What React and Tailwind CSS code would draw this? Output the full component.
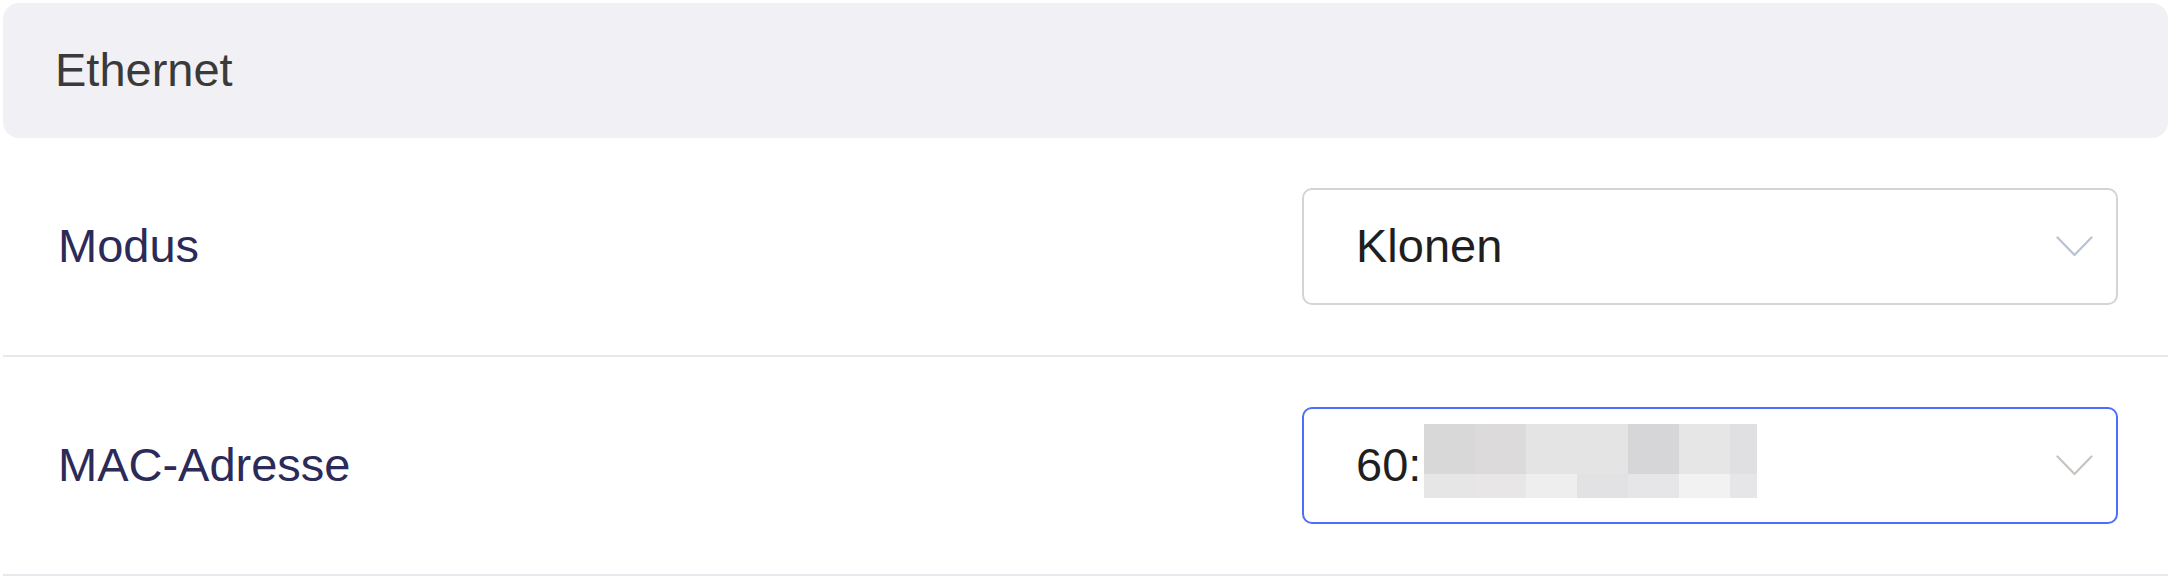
const FONT = "font-['Liberation_Sans',Arial,sans-serif]";

const MASK = [
  ["#d8d8d8", "#dcdadb", "#e4e4e4", "#e4e4e4", "#d6d6d8", "#e6e6e6", "#e0e0e2"],
  ["#e6e6e6", "#e8e6e6", "#eeeeee", "#e2e2e4", "#e6e6e8", "#f2f2f2", "#e6e6e8"],
];

function Chevron({ color }) {
  return (
    <svg width="37" height="21" viewBox="0 0 37 21" fill="none" className="shrink-0">
      <path d="M1.5 1.5L18.5 19L35.5 1.5" stroke={color} strokeWidth="2.2" strokeLinecap="round" strokeLinejoin="round" />
    </svg>
  );
}

function Select({ focused, children }) {
  return (
    <div
      className={`w-[816px] h-[117px] rounded-[10px] bg-white flex items-center justify-between pl-[52px] pr-[23px] ${
        focused ? "border-[2.5px] border-[#4f6ef7]" : "border-2 border-[#d4d4d8]"
      }`}
    >
      <div className="flex items-center text-[47px] text-[#1f1f1f]">{children}</div>
      <Chevron color={focused ? "#c9c3c0" : "#b7c2d6"} />
    </div>
  );
}

function Row({ label, children }) {
  return (
    <div className="h-[219px] flex items-center justify-between pl-[55px] pr-[50px] border-b-2 border-[#e8e8ee]">
      <span className="text-[47px] text-[#2b2a58]">{label}</span>
      {children}
    </div>
  );
}

export default function App() {
  return (
    <div className={`w-[2171px] h-[579px] bg-white px-[3px] pt-[3px] ${FONT}`}>
      <div className="h-[135px] rounded-[16px] bg-[#f0f0f5] flex items-center pl-[52px]">
        <span className="text-[47px] text-[#3a3a3a]">Ethernet</span>
      </div>

      <Row label="Modus">
        <Select>Klonen</Select>
      </Row>

      <Row label="MAC-Adresse">
        <Select focused>
          <span>60:</span>
          {/* pixelated part of the address */}
          <div className="flex flex-col ml-[3px] mb-[9px]">
            {MASK.map((row, i) => (
              <div key={i} className={`flex ${i === 0 ? "h-[50px]" : "h-[24px]"}`}>
                {row.map((c, j) => (
                  <div
                    key={j}
                    className={j === 6 ? "w-[27px]" : "w-[51px]"}
                    style={{ backgroundColor: c }}
                  />
                ))}
              </div>
            ))}
          </div>
        </Select>
      </Row>
    </div>
  );
}
